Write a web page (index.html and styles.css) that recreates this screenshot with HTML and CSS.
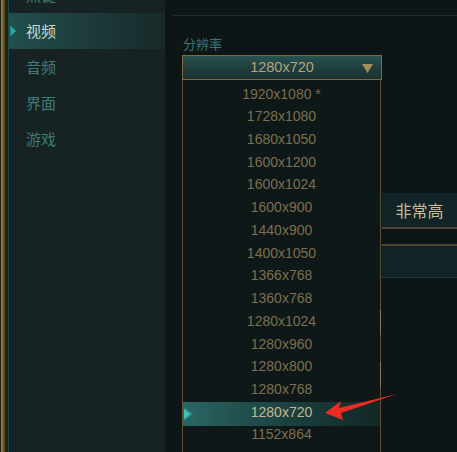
FILE: index.html
```
<!DOCTYPE html>
<html lang="zh">
<head>
<meta charset="utf-8">
<title>视频设置</title>
<link rel="stylesheet" href="styles.css">
</head>
<body>
<div class="app">
  <div class="edge"></div>
  <nav class="sidebar">
    <div class="nav-list">
      <div class="nav-item">热键</div>
      <div class="nav-item active">
        <svg class="nav-arrow" viewBox="0 0 7 12" width="7" height="12"><polygon points="0,0 6.5,6 0,12" fill="#24a9a1" stroke="#145c58" stroke-width="0.8"/></svg>
        视频
      </div>
      <div class="nav-item">音频</div>
      <div class="nav-item">界面</div>
      <div class="nav-item">游戏</div>
    </div>
  </nav>
  <main class="main">
    <div class="rule"></div>
    <div class="field">
      <div class="label">分辨率</div>
      <div class="select">
        <div class="select-head">
          <span class="select-value">1280x720</span>
          <svg class="caret" viewBox="0 0 11 9" width="11" height="9"><polygon points="0,0 11,0 5.5,9" fill="#a58d58"/></svg>
        </div>
        <ul class="options">
          <li>1920x1080 *</li>
          <li>1728x1080</li>
          <li>1680x1050</li>
          <li>1600x1200</li>
          <li>1600x1024</li>
          <li>1600x900</li>
          <li>1440x900</li>
          <li>1400x1050</li>
          <li>1366x768</li>
          <li>1360x768</li>
          <li>1280x1024</li>
          <li>1280x960</li>
          <li>1280x800</li>
          <li>1280x768</li>
          <li class="selected">
            <svg class="opt-arrow" viewBox="0 0 10 14" width="10" height="14"><polygon points="0,0 9,7 0,14" fill="#2a8f8a"/><polygon points="0,2 6,7 0,12" fill="#3cc2b8"/></svg>
            1280x720
          </li>
          <li>1152x864</li>
          <span class="scroll-mark m1"></span>
          <span class="scroll-mark m2"></span>
        </ul>
      </div>
    </div>
    <div class="setting-row">
      <div class="value value-quality">非常高</div>
    </div>
    <div class="setting-row">
      <div class="value value-blank"></div>
    </div>
  </main>
  <svg class="annotation" viewBox="0 0 457 452" width="457" height="452">
    <polygon points="325,413 341,401 339,408 397,394 341,413 343,420" fill="#ee2b22"/>
  </svg>
</div>
</body>
</html>
```
FILE: styles.css
```
* { box-sizing: border-box; }
html, body {
  margin: 0;
  padding: 0;
  width: 457px;
  height: 452px;
  overflow: hidden;
  background: #0e1618;
}
.app {
  position: relative;
  display: flex;
  width: 457px;
  height: 452px;
  overflow: hidden;
  font-family: "Liberation Sans", "Noto Sans CJK SC", sans-serif;
}
.edge {
  flex: 0 0 9px;
  background: linear-gradient(to right,
    #1e1f18 0, #1e1f18 1px,
    #8a7840 1px, #8a7840 3px,
    #5c4c22 3px, #5c4c22 5px,
    #1a2222 5px, #1a2222 8px,
    #1f4a42 8px, #1f4a42 9px);
}
.sidebar {
  flex: 0 0 156px;
  background: #172224;
  overflow: hidden;
}
.nav-list {
  margin-top: -23px;
}
.nav-item {
  position: relative;
  height: 36px;
  line-height: 36px;
  padding-left: 17px;
  font-family: "Noto Sans CJK SC", sans-serif;
  font-size: 15px;
  color: #3e7d75;
}
.nav-item.active {
  color: #c9d9d0;
  background: linear-gradient(to right, #21504d 0, #1e3f3e 40%, #19292a 100%);
}
.nav-arrow {
  position: absolute;
  left: 1px;
  top: 12px;
}
.main {
  flex: 1;
  position: relative;
  background: #0d1517;
}
.rule {
  margin: 15px 0 0 7px;
  height: 1px;
  background: #1b2a2b;
}
.field {
  margin-top: 20px;
  padding-left: 17px;
}
.label {
  padding-left: 1px;
  height: 16px;
  line-height: 16px;
  font-family: "Noto Sans CJK SC", sans-serif;
  font-size: 13px;
  color: #3a7973;
}
.select {
  position: relative;
  width: 200px;
  margin-top: 3px;
  z-index: 2;
}
.select-head {
  position: relative;
  height: 25px;
  border: 1px solid #7a6a45;
  background: linear-gradient(to bottom, #28514f 0, #1f3e3d 55%, #1a302f 100%);
  text-align: center;
  line-height: 23px;
  font-size: 14.5px;
  color: #b4a57c;
}
.caret {
  position: absolute;
  right: 8px;
  top: 8px;
}
.options {
  position: absolute;
  top: 100%;
  left: 0;
  width: 199px;
  height: 420px;
  margin: 0;
  padding: 2.6px 0 0;
  list-style: none;
  background: #0e1818;
  border-left: 1px solid #5e5236;
  border-right: 1px solid #5e5236;
}
.options li {
  position: relative;
  height: 22.73px;
  line-height: 22.73px;
  text-align: center;
  font-size: 14px;
  color: #7c6f4e;
}
.options li.selected {
  color: #c4b88f;
  line-height: 21px;
  height: 24px;
  margin-top: 1.5px;
  margin-bottom: -2.8px;
  background: linear-gradient(to right, #2b6664 0, #21504e 30%, #183a39 65%, #132726 100%);
}
.opt-arrow {
  position: absolute;
  left: 1px;
  top: 5px;
}
.scroll-mark {
  position: absolute;
  right: -1px;
  width: 1px;
  height: 25px;
  background: #8a7650;
}
.scroll-mark.m1 { top: 230px; }
.scroll-mark.m2 { top: 282px; }
.setting-row {
  display: flex;
  padding-left: 217px;
  margin-top: 113px;
}
.setting-row + .setting-row {
  margin-top: 15px;
}
.value {
  width: 75px;
  background: #132426;
}
.value-quality {
  height: 36px;
  border-bottom: 2px solid #4e4631;
  line-height: 34px;
  text-align: center;
  font-family: "Noto Sans CJK SC", sans-serif;
  font-size: 16px;
  color: #c9be93;
}
.value-blank {
  height: 34px;
  border-top: 2px solid #4e4631;
  border-bottom: 1px solid #1b3b3b;
}
.annotation {
  position: absolute;
  left: 0;
  top: 0;
  pointer-events: none;
  z-index: 5;
}
```
